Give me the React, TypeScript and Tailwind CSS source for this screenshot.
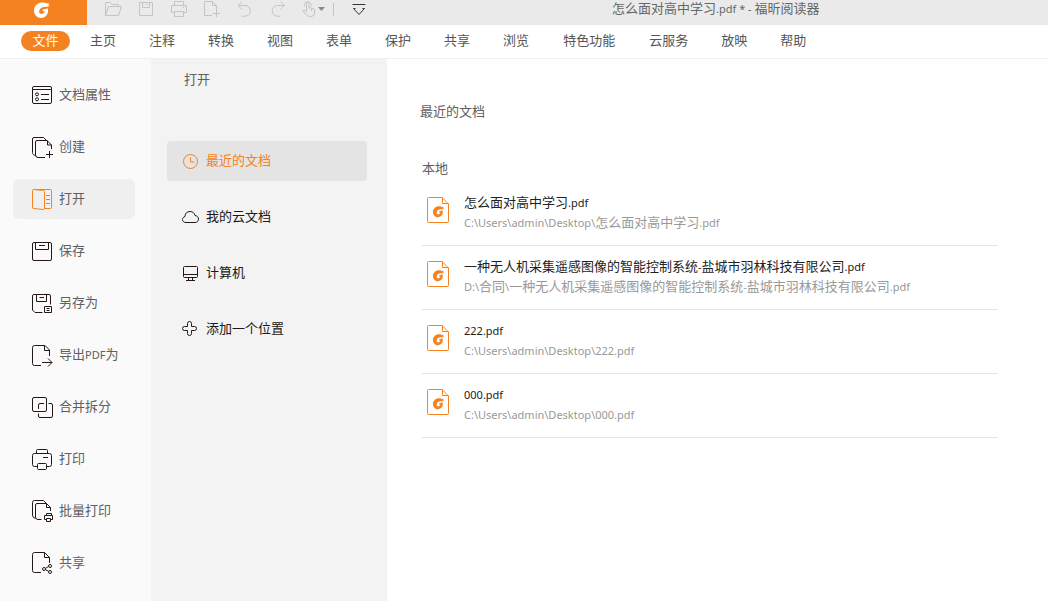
import { useState } from "react";
import type { ReactNode } from "react";

interface Entry {
  label: string;
  icon: ReactNode;
}

interface RecentFile {
  name: string;
  path: string;
}

const TABS = ["主页", "注释", "转换", "视图", "表单", "保护", "共享", "浏览", "特色功能", "云服务", "放映", "帮助"];

const FILES: RecentFile[] = [
  { name: "怎么面对高中学习.pdf", path: "C:\\Users\\admin\\Desktop\\怎么面对高中学习.pdf" },
  {
    name: "一种无人机采集遥感图像的智能控制系统-盐城市羽林科技有限公司.pdf",
    path: "D:\\合同\\一种无人机采集遥感图像的智能控制系统-盐城市羽林科技有限公司.pdf",
  },
  { name: "222.pdf", path: "C:\\Users\\admin\\Desktop\\222.pdf" },
  { name: "000.pdf", path: "C:\\Users\\admin\\Desktop\\000.pdf" },
];

const TOOLS: Entry[] = [
  {
    label: "打开",
    icon: <path d="M.5 15.5V2.5h5l1.5 2h6.5v2M.5 15.5l3-9h13l-3 9z" />,
  },
  {
    label: "保存",
    icon: <path d="M1.5 2.5h13v13h-13zM4.5 2.5v5h7v-5M8 4.5h1.5" />,
  },
  {
    label: "打印",
    icon: <path d="M3.5 5.5v-4h9v4M3.5 12.5h-3v-7h15v7h-3M3.5 11.5h9v5h-9zM12 7.5h1.5" />,
  },
  {
    label: "创建",
    icon: <path d="M8 15.5H.5v-14h8l4 4v5M8.5 1.5v4h4M12.5 10v7M9 13.5h7" />,
  },
  {
    label: "撤销",
    icon: <path d="M5 1.5l-4 4 4 4M1.5 5.5h6.5a5.3 5.3 0 0 1 0 10.7H5" />,
  },
  {
    label: "重做",
    icon: <path d="M10.5 1.5l4 4-4 4M14 5.5H7.5a5.3 5.3 0 0 0 0 10.7h3" />,
  },
];

const MENU: Entry[] = [
  {
    label: "文档属性",
    icon: (
      <>
        <rect x=".5" y="2.5" width="19" height="17" rx="1.5" />
        <path d="M.5 5.5h19M9 10.5h8M9 15.5h8" />
        <circle cx="5" cy="10.3" r="1.5" />
        <circle cx="5" cy="15.3" r="1.5" />
      </>
    ),
  },
  {
    label: "创建",
    icon: (
      <path d="M4 19.5C1.5 19.5.5 18 .5 16.5V3Q.5 1.5 2 1.5h9.5l2.5 2.5M13 21.5H6q-2.5 0-2.5-2.5V6q0-1.5 1.5-1.5h10l4.5 4.5v4M15.5 4.5v4.5h4M17.5 15v7M14 18.5h7" />
    ),
  },
  {
    label: "打开",
    icon: (
      <path d="M1.5 1.5h17q1 0 1 1v17q0 1-1 1h-6M1.5 1.5q-1 0-1 1v17q0 1 1 1l10 1q1 0 1-1V3.5q0-1-1-1zM14 7.5h4M14 11.5h4M14 15.5h4" />
    ),
  },
  {
    label: "保存",
    icon: (
      <>
        <rect x=".5" y="2.5" width="19" height="18" rx="1.5" />
        <path d="M3.5 2.5v7h13v-7M7 5.5h6" />
      </>
    ),
  },
  {
    label: "另存为",
    icon: (
      <path d="M10.5 20.5H3L.5 18V4Q.5 2.5 2 2.5h15q1.5 0 1.5 1.5v8.5M4.5 2.5v7h10v-7M7.5 5.5H12M12.5 14.5h7v6h-7zM14.5 16.5h3M14.5 18.5h3" />
    ),
  },
  {
    label: "导出PDF为",
    icon: (
      <path d="M9 21.5H2.5Q.5 21.5.5 19.5v-16q0-2 2-2H13l4.5 4.5v6M12.5 1.5v5h5M10 18.5h10M16 14.5l4 4-4 4" />
    ),
  },
  {
    label: "合并拆分",
    icon: (
      <>
        <rect x=".5" y="1.5" width="14" height="14" rx="1.5" />
        <path d="M12 7.5H8Q6.5 7.5 6.5 9v4M16.5 7.5H19q1.5 0 1.5 1.5v11q0 1.5-1.5 1.5H8Q6.5 21.5 6.5 20v-2.5" />
      </>
    ),
  },
  {
    label: "打印",
    icon: (
      <>
        <path d="M4.5 5.5V2.5q0-1 1-1h9q1 0 1 1v3M5.5 18.5h-3q-2 0-2-2v-9q0-2 2-2h15q2 0 2 2v9q0 2-2 2h-3M11 9.5h5" />
        <rect x="5.5" y="15.5" width="9" height="6" rx="1" />
      </>
    ),
  },
  {
    label: "批量打印",
    icon: (
      <>
        <path d="M3.5 18.5Q.5 18 .5 15V2.5Q.5.5 2.5.5h9l2.5 2.5M9.5 19.5H6q-2.5 0-2.5-2.5V5q0-1.5 1.5-1.5h9.5l4 4V11M14.5 3.5v4h4" />
        <path d="M14.5 15.5v-2h5v2M14.5 19.5h-2v-4h8v4h-2M14.5 18.5h4v3h-4z" />
      </>
    ),
  },
  {
    label: "共享",
    icon: (
      <>
        <path d="M9 20.5H2.5Q.5 20.5.5 18.5v-16q0-2 2-2H12.5l5 5V11M12.5.5v5h5M13.5 16.3l3-1.8M13.5 17.7l3 1.5" />
        <circle cx="12" cy="17" r="1.5" />
        <circle cx="18" cy="14" r="1.5" />
        <circle cx="18" cy="20" r="1.5" />
      </>
    ),
  },
];

const PLACES: Entry[] = [
  {
    label: "最近的文档",
    icon: (
      <>
        <circle cx="8.5" cy="9.5" r="7" />
        <path d="M8.5 5.5v4.5h4" />
      </>
    ),
  },
  {
    label: "我的云文档",
    icon: (
      <path d="M4 14.5C1.5 14.5.5 13 .5 11.5S1.5 9 3 8.5C3 5 5.5 3.5 8 3.5s4.5 1.5 5 4c2 .3 3.5 1.5 3.5 3.5s-1.5 3.5-3.5 3.5z" />
    ),
  },
  {
    label: "计算机",
    icon: (
      <>
        <rect x="1.5" y="2.5" width="14" height="11" rx="1" />
        <path d="M1.5 10.5h14M6.5 13.5v3M10.5 13.5v3M4 16.5h9" />
      </>
    ),
  },
  {
    label: "添加一个位置",
    icon: (
      <path d="M5.5 6.5V3.5a2 2 0 0 1 4 0v3h3a2 2 0 0 1 0 4h-3v3a2 2 0 0 1-4 0v-3h-3a2 2 0 0 1 0-4z" />
    ),
  },
];

// Latin runs are set a little smaller than the Chinese text around them.
function MixedText({ text }: { text: string }) {
  const parts = text.split(/([\x20-\x7e]+)/).filter(Boolean);
  return (
    <>
      {parts.map((part, i) =>
        /^[\x20-\x7e]/.test(part) ? (
          <span key={i} className="text-[11px]">{part}</span>
        ) : (
          part
        )
      )}
    </>
  );
}

function FoxMark() {
  return (
    <path d="M15.5 1.5L12.5 1.2C8-.8 0 1 0 8.8 0 13 3.3 16 7 16c4 0 7-3 7-7V6.5L9.5 7.2 8 9h2.5c-.2 2-1.5 3-3 3C5.8 12 4.8 10.500 5.2 8.8 6 6 9 4.500 13 4.800l2 .4-1.500-1.400 2.500-.2-1.700-1.100z" />
  );
}

function FileIcon() {
  return (
    <svg width="22" height="26" viewBox="0 0 22 26" fill="none" className="shrink-0 text-[#f58220]">
      <path d="M15 .5H1.5q-1 0-1 1v23q0 1 1 1h19q1 0 1-1V7zM15.5.5v6h6" stroke="currentColor" />
      <g transform="translate(6 9) scale(.7)" fill="currentColor">
        <FoxMark />
      </g>
    </svg>
  );
}

function TitleBar() {
  return (
    <header className="flex h-[25px] items-start bg-[#eaeaea]">
      <div className="flex h-full w-[87px] shrink-0 justify-center bg-[#f58220] pt-0.5">
        <svg width="16" height="16" viewBox="0 0 16 16" fill="white" className="mr-1">
          <FoxMark />
        </svg>
      </div>
      <div className="flex shrink-0 items-center gap-[17px] pl-[18px] text-[#c4c4c4]">
        {TOOLS.map(({ label, icon }) => (
          <button key={label} type="button" aria-label={label}>
            <svg width="16" height="18" viewBox="0 0 16 18" fill="none" stroke="currentColor" className="block overflow-visible">
              {icon}
            </svg>
          </button>
        ))}
        <button type="button" aria-label="手型工具" className="-ml-px">
          <svg width="24" height="18" viewBox="0 0 24 18" fill="none" className="block">
            <path
              d="M4.5 11V3.5a1.3 1.3 0 0 1 2.5 0V8q2.5-.8 2.7.8Q12.5 8 12.5 10v3q0 3.5-3.5 3.5H7.5Q5.5 16.5 4 14L.8 11q1-1.8 3.700.5M2.5 6.5a3.500 3.500 0 1 1 6.500 0M9.5 9v2"
              stroke="currentColor"
            />
            <path d="M16 7h7l-3.5 4z" fill="#8a8a8a" />
          </svg>
        </button>
      </div>
      <div className="mt-[3px] ml-[7px] h-[13px] w-px shrink-0 bg-[#c4c4c4]" />
      <button type="button" aria-label="自定义快速访问工具栏" className="ml-[18px] shrink-0">
        <svg width="14" height="18" viewBox="0 0 14 18" fill="none" stroke="#333" className="block">
          <path d="M.5 4.5h13M3.500 8.500h-2l5.500 6 5.500-6h-2" />
        </svg>
      </button>
      <h1 className="ml-[246px] whitespace-nowrap leading-4 text-[#666]">
        <MixedText text="怎么面对高中学习.pdf * - 福昕阅读器" />
      </h1>
    </header>
  );
}

function TabBar() {
  return (
    <nav className="flex h-[34px] items-center border-b border-[#f0f0f0] bg-white pb-0.5 pl-[21px] text-[#555]">
      <button type="button" className="mr-5 flex h-5 w-[49px] shrink-0 items-center justify-center rounded-full bg-[#f58220] pb-0.5 text-white">
        文件
      </button>
      <div className="flex gap-[33px] pb-0.5 whitespace-nowrap">
        {TABS.map((tab) => (
          <button key={tab} type="button" className={tab.length > 3 ? "px-px" : ""}>{tab}</button>
        ))}
      </div>
    </nav>
  );
}

export default function App() {
  const [section, setSection] = useState(2);
  const [place, setPlace] = useState(0);

  return (
    <div className="flex min-h-screen flex-col bg-white font-['Noto_Sans','Noto_Sans_CJK_SC',sans-serif] text-[13px] leading-5">
      <TitleBar />
      <TabBar />

      <div className="flex grow">
        {/* Backstage menu */}
        <nav className="flex w-[151px] shrink-0 flex-col gap-3 bg-[#fafafa] px-[13px] pt-4">
          {MENU.map(({ label, icon }, i) => (
            <button
              key={label}
              type="button"
              onClick={() => setSection(i)}
              className={`flex h-10 w-[122px] items-center gap-[5px] rounded-md pl-[19px] whitespace-nowrap text-[#606060] ${section === i ? "bg-[#efefef]" : ""}`}
            >
              <svg
                width="22"
                height="22"
                viewBox="0 0 22 22"
                fill="none"
                stroke="currentColor"
                className={`shrink-0 overflow-visible ${section === i ? "text-[#f58220]" : "text-[#231815]"}`}
              >
                {icon}
              </svg>
              <span className="pb-0.5"><MixedText text={label} /></span>
            </button>
          ))}
        </nav>

        {/* Locations */}
        <section className="w-[236px] shrink-0 bg-[#f3f3f3] pr-5 pl-4">
          <h2 className="pt-[10px] pl-[17px] text-[#606060]">打开</h2>
          <div className="flex flex-col gap-4 pt-[52px]">
            {PLACES.map(({ label, icon }, i) => (
              <button
                key={label}
                type="button"
                onClick={() => setPlace(i)}
                className={`flex h-10 items-center gap-[6px] rounded pl-[15px] ${place === i ? "bg-[#e4e4e4] text-[#f58220]" : "text-[#231815]"}`}
              >
                <svg width="18" height="18" viewBox="0 0 18 18" fill="none" stroke="currentColor" className="shrink-0">
                  {icon}
                </svg>
                <span className="pb-0.5">{label}</span>
              </button>
            ))}
          </div>
        </section>

        {/* Recent files */}
        <main className="min-w-0 grow pr-[50px] pl-[35px] text-[#606060]">
          <h2 className="-ml-0.5 pt-[42px]">最近的文档</h2>
          <h3 className="pt-[37px]">本地</h3>
          <ul className="pt-1">
            {FILES.map(({ name, path }) => (
              <li key={name} className="border-b border-[#e5e5e5]">
                <button type="button" className="flex h-[63px] w-full items-start gap-[15px] pt-[10px] pl-[5px] text-left">
                  <span className="pt-[5px]"><FileIcon /></span>
                  <span className="flex flex-col whitespace-nowrap">
                    <span className="text-[#222]"><MixedText text={name} /></span>
                    <span className="leading-[18px] text-[#999]"><MixedText text={path} /></span>
                  </span>
                </button>
              </li>
            ))}
          </ul>
        </main>
      </div>
    </div>
  );
}
